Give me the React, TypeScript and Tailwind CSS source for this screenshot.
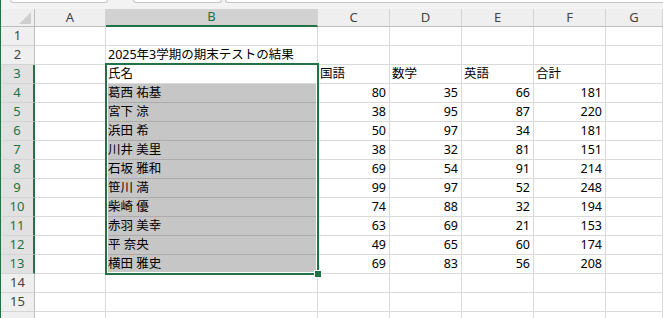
import React from 'react';

const GREEN = '#217346';

const cols = ['A', 'B', 'C', 'D', 'E', 'F', 'G'];

// [name, 国語, 数学, 英語, 合計]
const scores: [string, number, number, number, number][] = [
  ['葛西 祐基', 80, 35, 66, 181],
  ['宮下 涼', 38, 95, 87, 220],
  ['浜田 希', 50, 97, 34, 181],
  ['川井 美里', 38, 32, 81, 151],
  ['石坂 雅和', 69, 54, 91, 214],
  ['笹川 満', 99, 97, 52, 248],
  ['柴崎 優', 74, 88, 32, 194],
  ['赤羽 美幸', 63, 69, 21, 153],
  ['平 奈央', 49, 65, 60, 174],
  ['横田 雅史', 69, 83, 56, 208],
];

type Row = { cells: (string | number | null)[] };

const empty = (): Row => ({ cells: [null, null, null, null, null, null, null] });

const rows: Row[] = [
  empty(),
  { cells: [null, '2025年3学期の期末テストの結果', null, null, null, null, null] },
  { cells: [null, '氏名', '国語', '数学', '英語', '合計', null] },
  ...scores.map((s) => ({ cells: [null, ...s, null] })),
  empty(),
  empty(),
  empty(),
];

// row header, A..F, G takes the rest
const gridCols = 'grid grid-cols-[34px_71px_212px_72px_72px_72px_72px_1fr]';

const CornerCell = () => (
  <div className="h-[18px] border-r border-b border-[#bdbdbd] bg-[#efefef] flex items-end justify-end pr-[3px] pb-[2px]">
    <svg width="12" height="12" viewBox="0 0 12 12">
      <polygon points="12,0 12,12 0,12" fill="#cfcfcf" />
    </svg>
  </div>
);

const ColHeader = ({ label }: { label: string }) => {
  const active = label === 'B';
  return (
    <div
      className={
        active
          ? 'h-[18px] bg-[#d2d2d2] border-r border-[#d4d4d4] border-b-2 border-b-[#217346] text-[#217346] flex items-center justify-center text-[13px]'
          : 'h-[18px] bg-[#efefef] border-r border-[#d4d4d4] border-b border-b-[#bdbdbd] text-[#444] flex items-center justify-center text-[13px]'
      }
    >
      {label}
    </div>
  );
};

const RowHeader = ({ n }: { n: number }) => {
  const active = n >= 3 && n <= 13;
  return (
    <div
      className={
        active
          ? 'h-[19px] bg-[#e1e1e1] border-b border-[#d4d4d4] border-r-2 border-r-[#217346] text-[#217346] flex items-center justify-center text-[13px]'
          : 'h-[19px] bg-[#efefef] border-b border-[#d4d4d4] border-r border-r-[#bdbdbd] text-[#444] flex items-center justify-center text-[13px]'
      }
    >
      {/* row 16 is only a sliver at the bottom edge */}
      {n <= 15 ? n : null}
    </div>
  );
};

const Cell = ({ value, shaded }: { value: string | number | null; shaded: boolean }) => {
  const isNum = typeof value === 'number';
  return (
    <div
      className={
        (shaded
          ? 'bg-[#c6c6c6] border-b border-[#ababab] border-r border-r-[#c6c6c6] '
          : 'bg-white border-b border-r border-[#dadada] ') +
        'h-[19px] flex items-center whitespace-nowrap text-[12.5px] text-black ' +
        (isNum ? 'justify-end pr-[3px]' : 'justify-start pl-[2px]')
      }
    >
      {value}
    </div>
  );
};

export default function App() {
  return (
    <div
      className="relative w-[663px] h-[318px] overflow-hidden bg-white border-l border-[#217346]"
      style={{ fontFamily: '"Noto Sans", "Noto Sans CJK JP", sans-serif' }}
    >
      {/* remnant of the name box / formula bar */}
      <div className="h-[9px] bg-[#f3f3f3] flex items-start">
        <div className="ml-[9px] w-[98px] h-[3px] bg-white border border-t-0 border-[#c6c6c6] rounded-b-[3px]" />
        <div className="ml-[25px] w-[89px] h-[3px] bg-white border border-t-0 border-[#c6c6c6] rounded-b-[3px]" />
        <div className="ml-[3px] flex-1 h-[3px] bg-white border border-t-0 border-r-0 border-[#c6c6c6] rounded-bl-[3px]" />
      </div>

      <div className={gridCols}>
        <CornerCell />
        {cols.map((c) => (
          <ColHeader key={c} label={c} />
        ))}

        {rows.map((r, i) => {
          const n = i + 1;
          return (
            <React.Fragment key={n}>
              <RowHeader n={n} />
              {r.cells.map((v, j) => (
                <Cell key={j} value={v} shaded={j === 1 && n >= 4 && n <= 13} />
              ))}
            </React.Fragment>
          );
        })}
      </div>

      {/* selection B3:B13 */}
      <div
        className="absolute left-[104px] top-[63px] w-[214px] h-[212px] border-2 shadow-[inset_0_0_0_1px_#ffffff]"
        style={{ borderColor: GREEN }}
      />
      {/* fill handle */}
      <div className="absolute left-[313px] top-[270px] w-[8px] h-[8px] bg-[#217346] border border-white" />
    </div>
  );
}
